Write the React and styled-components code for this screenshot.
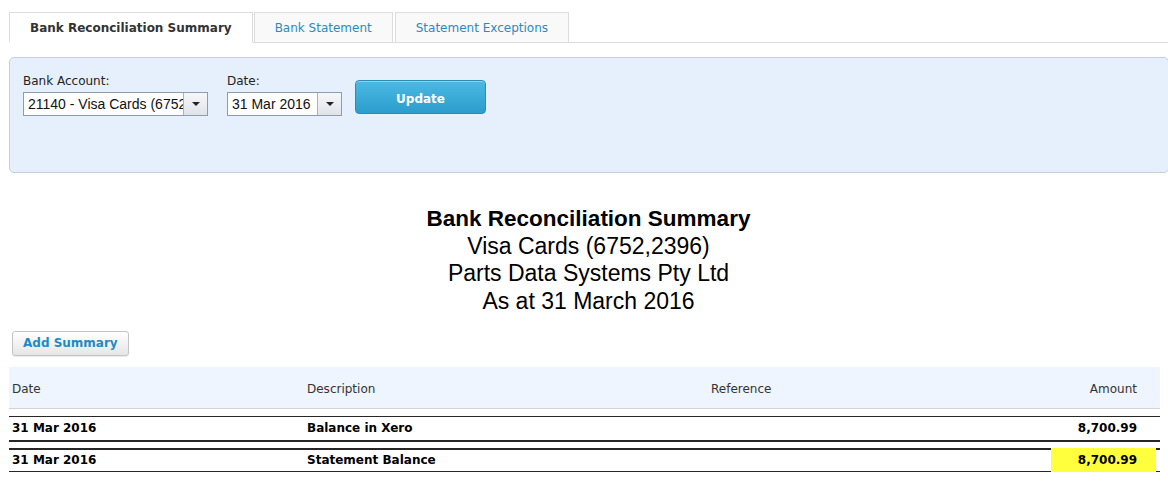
import React from 'react';
import styled, { createGlobalStyle } from 'styled-components';

const GlobalStyle = createGlobalStyle`
  body {
    margin: 0;
    background: #ffffff;
    font-family: "DejaVu Sans", Verdana, sans-serif;
    font-size: 12px;
    color: #333333;
  }
`;

const Page = styled.div`
  padding: 12px 0 0 9px;
  overflow: hidden;
`;

const TabBar = styled.div`
  display: flex;
  align-items: flex-end;
  border-bottom: 1px solid #dddddd;
  margin-right: -1px;
`;

const Tab = styled.div`
  height: 29px;
  box-sizing: content-box;
  line-height: 31px;
  padding: 0 20px;
  margin-right: ${(p) => p.gap || 0}px;
  margin-bottom: -1px;
  border: 1px solid #dddddd;
  border-bottom-color: ${(p) => (p.active ? '#ffffff' : '#dddddd')};
  background: ${(p) => (p.active ? '#ffffff' : '#f9f9f9')};
  color: ${(p) => (p.active ? '#333333' : '#2a8bbf')};
  font-weight: ${(p) => (p.active ? 'bold' : 'normal')};
  white-space: nowrap;
  overflow: hidden;
`;

const FilterPanel = styled.div`
  margin-top: 14px;
  margin-right: -1px;
  height: 116px;
  box-sizing: border-box;
  padding: 16px 13px;
  background: #e6f0fd;
  border: 1px solid #c6d0dc;
  border-radius: 5px;
  display: flex;
  align-items: flex-start;
`;

const Field = styled.div`
  display: flex;
  flex-direction: column;
  margin-right: ${(p) => p.gap}px;
`;

const Label = styled.label`
  line-height: 14px;
  margin-bottom: 4px;
  color: #222222;
`;

const SelectBox = styled.div`
  display: flex;
  width: ${(p) => p.width}px;
  height: 24px;
  box-sizing: border-box;
  border: 1px solid #8f9cad;
  background: #ffffff;
`;

const SelectValue = styled.div`
  flex: 1;
  min-width: 0;
  overflow: hidden;
  white-space: nowrap;
  padding-left: 4px;
  font-family: "Liberation Sans", Arial, sans-serif;
  font-size: 14px;
  line-height: 22px;
  color: #111111;
`;

const SelectArrow = styled.div`
  width: 23px;
  flex-shrink: 0;
  border-left: 1px solid #a9b4c2;
  background: linear-gradient(#f6f7f9, #dfe4ea);
  display: flex;
  align-items: center;
  justify-content: center;

  &::after {
    content: '';
    border-left: 4px solid transparent;
    border-right: 4px solid transparent;
    border-top: 4px solid #222222;
  }
`;

const UpdateButton = styled.button`
  margin-top: 6px;
  width: 131px;
  height: 34px;
  border: 1px solid #2a8cbb;
  border-radius: 4px;
  background: linear-gradient(#4bb9e3, #2b9dcd);
  box-shadow: inset 0 1px 0 rgba(255, 255, 255, 0.35);
  color: #ffffff;
  font-family: "DejaVu Sans", Verdana, sans-serif;
  font-size: 12px;
  font-weight: bold;
  padding: 3px 0 0;
`;

const ReportTitle = styled.div`
  margin-top: 32px;
  text-align: center;
  font-family: "Liberation Sans", Arial, sans-serif;
  color: #000000;
  line-height: 27.7px;
`;

const TitleLine = styled.div`
  font-size: ${(p) => (p.bold ? 22.5 : 23)}px;
  font-weight: ${(p) => (p.bold ? 'bold' : 'normal')};
`;

const AddButton = styled.button`
  display: block;
  margin: 15px 0 0 3px;
  height: 25px;
  padding: 0 10px;
  border: 1px solid #c4c4c4;
  border-radius: 3px;
  background: linear-gradient(#ffffff, #e6e6e6);
  box-shadow: 0 1px 1px rgba(0, 0, 0, 0.08);
  color: #1e8bc4;
  font-family: "DejaVu Sans", Verdana, sans-serif;
  font-size: 12px;
  font-weight: bold;
`;

const Table = styled.div`
  margin: 11px 8px 0 0;
`;

const columns = '295px 404px 1fr 200px';

const HeaderRow = styled.div`
  display: grid;
  grid-template-columns: ${columns};
  align-items: center;
  height: 42px;
  box-sizing: border-box;
  padding: 4px 23px 0 3px;
  background: #eef5fe;
  border-bottom: 1px solid #cfd3d8;
  color: #333333;
`;

const Rows = styled.div`
  margin-top: 7px;
`;

const Row = styled.div`
  position: relative;
  display: grid;
  grid-template-columns: ${columns};
  align-items: center;
  height: ${(p) => p.height}px;
  margin-top: ${(p) => p.offset || 0}px;
  padding: 0 23px 0 3px;
  border-top: ${(p) => p.top}px solid #262626;
  border-bottom: ${(p) => p.bottom}px solid #262626;
  font-size: 12px;
  font-weight: bold;
  color: #000000;
`;

const Cell = styled.div`
  position: relative;
  z-index: 1;
  text-align: ${(p) => (p.right ? 'right' : 'left')};
`;

const Highlight = styled.span`
  position: absolute;
  top: -2px;
  bottom: -5px;
  right: 4px;
  width: 105px;
  background: #ffff3d;
`;

const rows = [
  { date: '31 Mar 2016', desc: 'Balance in Xero', amount: '8,700.99', height: 23, top: 1, bottom: 2 },
  { date: '31 Mar 2016', desc: 'Statement Balance', amount: '8,700.99', height: 21, top: 2, bottom: 1, offset: 6, marked: true },
];

const App = () => (
  <Page>
    <GlobalStyle />
    <TabBar>
      <Tab active gap={1}>Bank Reconciliation Summary</Tab>
      <Tab gap={2}>Bank Statement</Tab>
      <Tab>Statement Exceptions</Tab>
    </TabBar>

    <FilterPanel>
      <Field gap={19}>
        <Label>Bank Account:</Label>
        <SelectBox width={185}>
          <SelectValue>21140 - Visa Cards (6752,2396)</SelectValue>
          <SelectArrow />
        </SelectBox>
      </Field>
      <Field gap={13}>
        <Label>Date:</Label>
        <SelectBox width={115}>
          <SelectValue>31 Mar 2016</SelectValue>
          <SelectArrow />
        </SelectBox>
      </Field>
      <UpdateButton type="button">Update</UpdateButton>
    </FilterPanel>

    <ReportTitle>
      <TitleLine bold>Bank Reconciliation Summary</TitleLine>
      <TitleLine>Visa Cards (6752,2396)</TitleLine>
      <TitleLine>Parts Data Systems Pty Ltd</TitleLine>
      <TitleLine>As at 31 March 2016</TitleLine>
    </ReportTitle>

    <AddButton type="button">Add Summary</AddButton>

    <Table>
      <HeaderRow>
        <Cell>Date</Cell>
        <Cell>Description</Cell>
        <Cell>Reference</Cell>
        <Cell right>Amount</Cell>
      </HeaderRow>
      <Rows>
        {rows.map((row, idx) => (
          <Row key={idx} height={row.height} top={row.top} bottom={row.bottom} offset={row.offset}>
            {row.marked && <Highlight />}
            <Cell>{row.date}</Cell>
            <Cell>{row.desc}</Cell>
            <Cell />
            <Cell right>{row.amount}</Cell>
          </Row>
        ))}
      </Rows>
    </Table>
  </Page>
);

export default App;
